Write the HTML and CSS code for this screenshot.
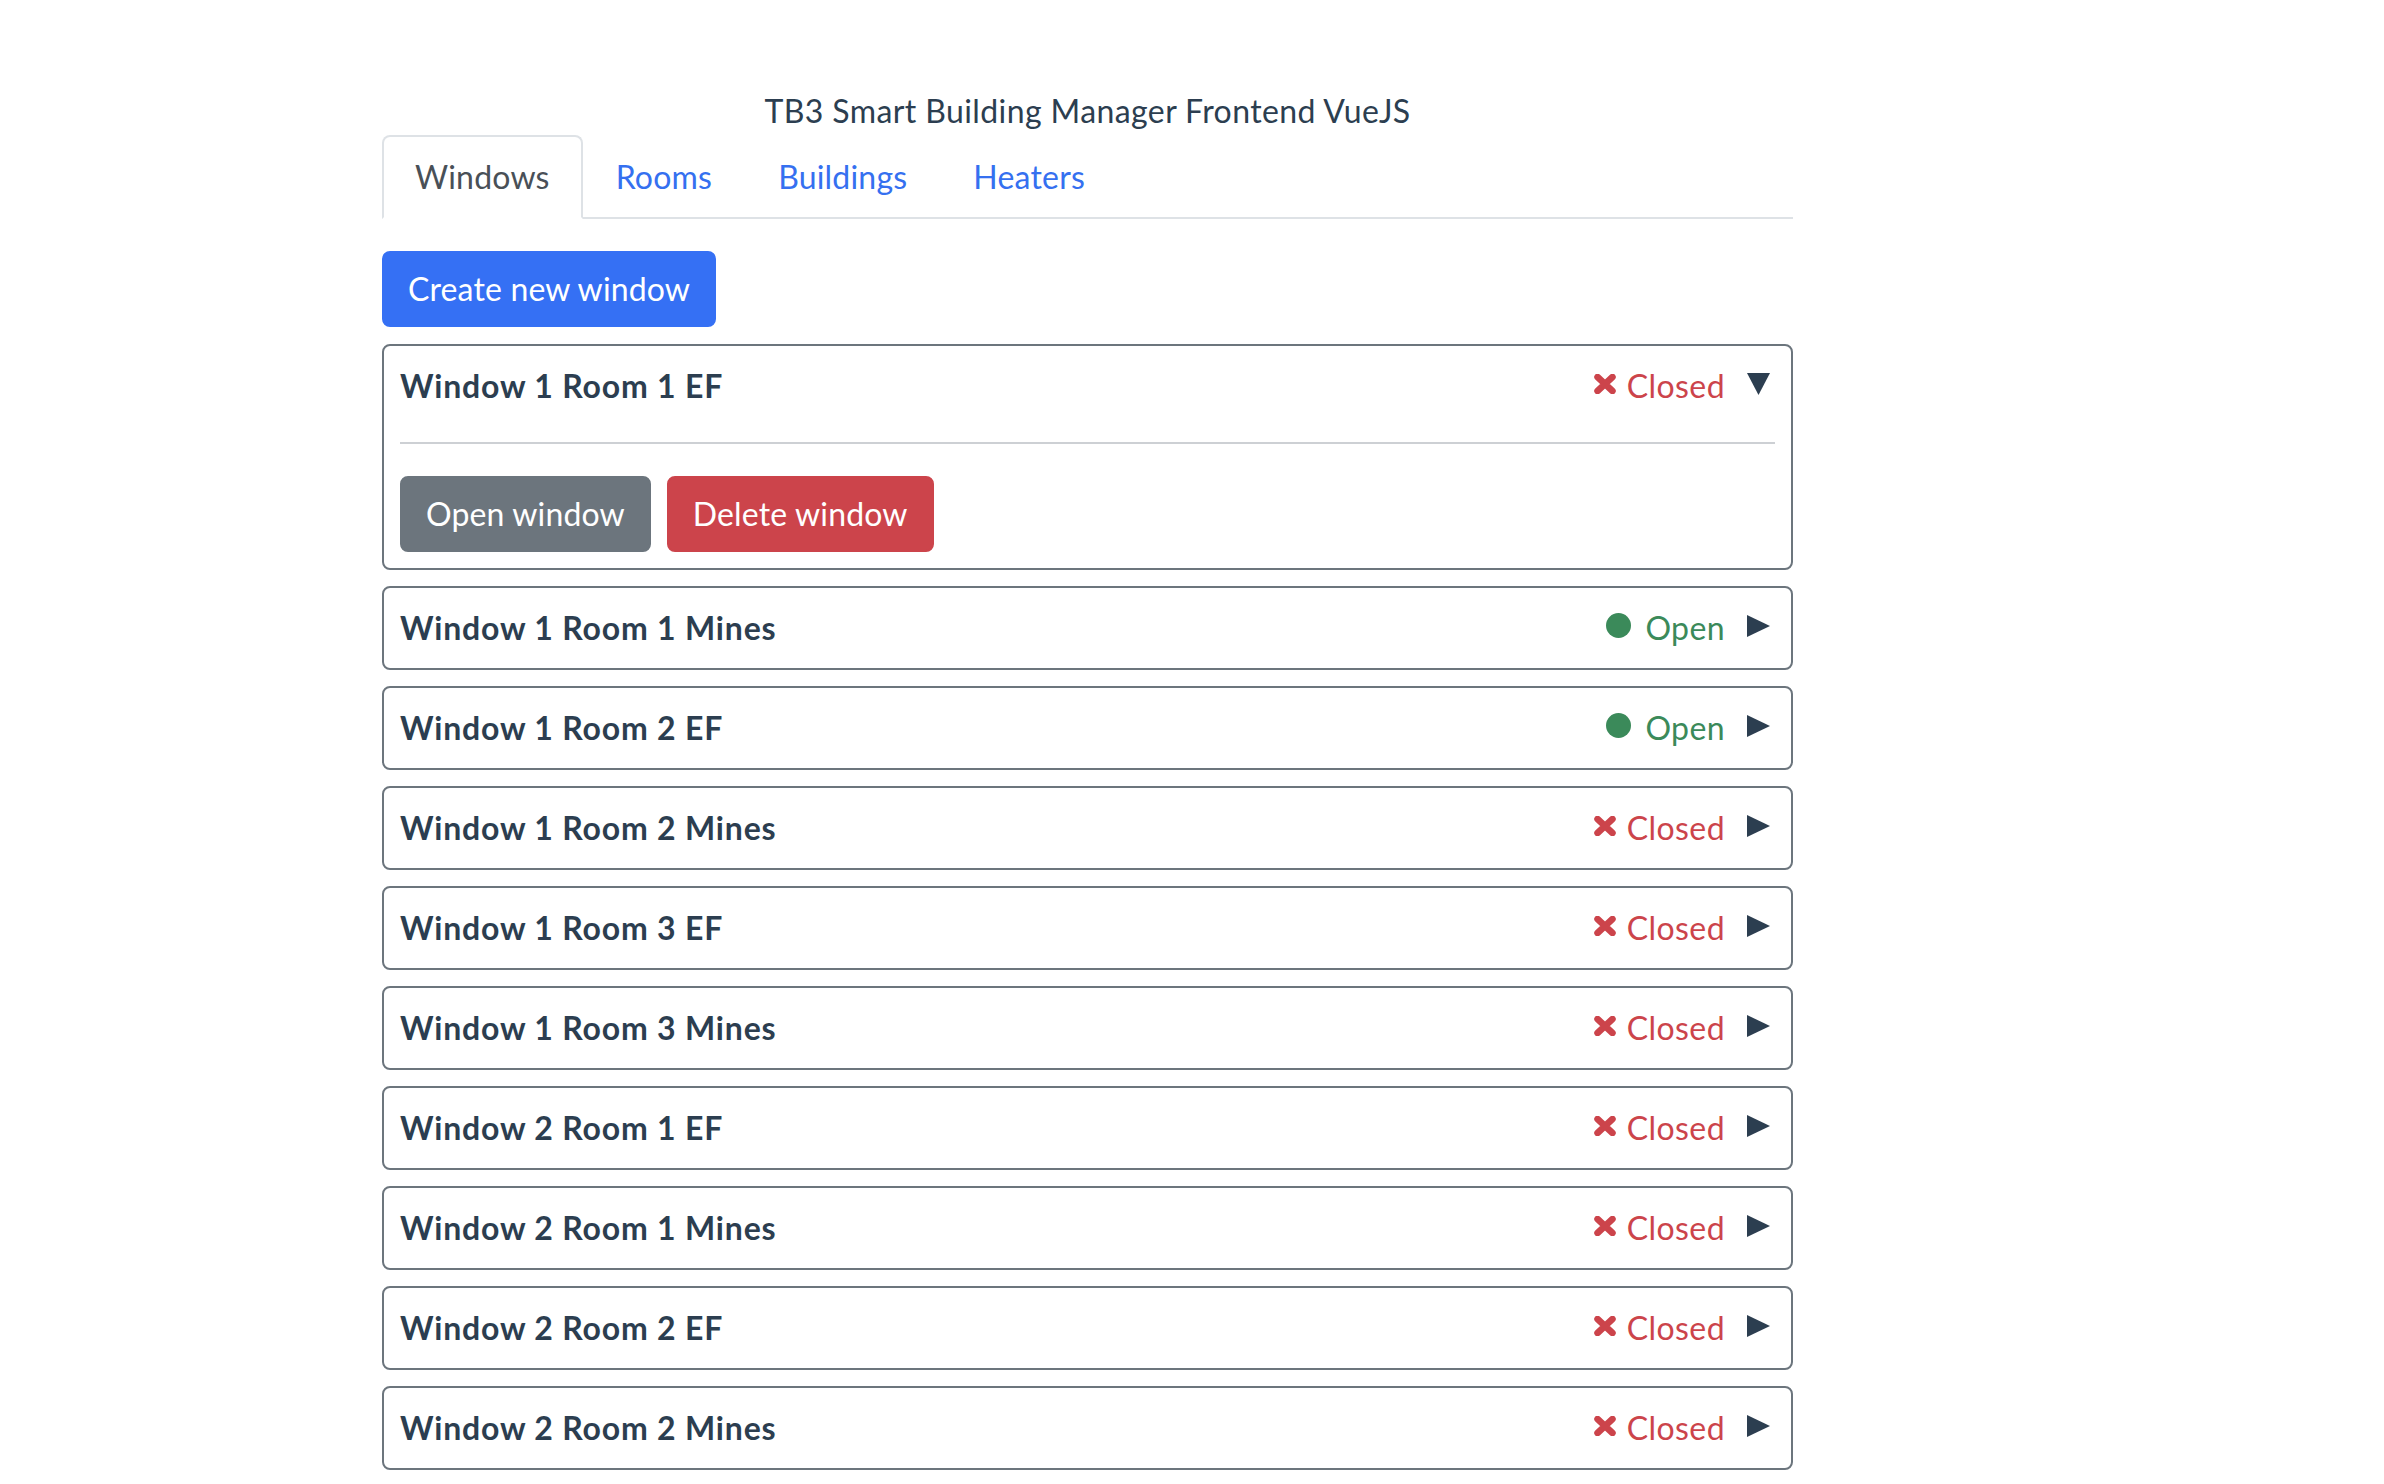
FILE: index.html
```html
<!DOCTYPE html>
<html lang="en">
<head>
<meta charset="utf-8">
<title>TB3 Smart Building Manager Frontend VueJS</title>
<link rel="stylesheet" href="styles.css">
</head>
<body>
<div class="page">
  <div class="container">
    <div class="app-title">TB3 Smart Building Manager Frontend VueJS</div>
    <ul class="tabs">
      <li class="tab active">Windows</li>
      <li class="tab">Rooms</li>
      <li class="tab">Buildings</li>
      <li class="tab">Heaters</li>
    </ul>
    <button class="btn btn-primary create-btn">Create new window</button>

    <div class="card">
      <div class="card-head">
        <span class="card-title">Window 1 Room 1 EF</span>
        <span class="status closed"><svg class="ico-x" viewBox="0 0 22 20" width="22" height="20"><path d="M3.5 3 L18.5 17 M18.5 3 L3.5 17" stroke="currentColor" stroke-width="6.5" stroke-linecap="round"/></svg>Closed</span>
        <svg class="caret" viewBox="0 0 23 22" width="23" height="22"><polygon points="0,0 23,0 11.5,22" /></svg>
      </div>
      <hr class="divider">
      <div class="actions">
        <button class="btn btn-secondary">Open window</button>
        <button class="btn btn-danger">Delete window</button>
      </div>
    </div>

    <div class="card">
      <div class="card-head">
        <span class="card-title">Window 1 Room 1 Mines</span>
        <span class="status open"><svg class="ico-dot" viewBox="0 0 25 25" width="25" height="25"><circle cx="12.5" cy="12.5" r="12.5"/></svg>Open</span>
        <svg class="caret" viewBox="0 0 23 22" width="23" height="22"><polygon points="0,0 23,11 0,22" /></svg>
      </div>
    </div>

    <div class="card">
      <div class="card-head">
        <span class="card-title">Window 1 Room 2 EF</span>
        <span class="status open"><svg class="ico-dot" viewBox="0 0 25 25" width="25" height="25"><circle cx="12.5" cy="12.5" r="12.5"/></svg>Open</span>
        <svg class="caret" viewBox="0 0 23 22" width="23" height="22"><polygon points="0,0 23,11 0,22" /></svg>
      </div>
    </div>

    <div class="card">
      <div class="card-head">
        <span class="card-title">Window 1 Room 2 Mines</span>
        <span class="status closed"><svg class="ico-x" viewBox="0 0 22 20" width="22" height="20"><path d="M3.5 3 L18.5 17 M18.5 3 L3.5 17" stroke="currentColor" stroke-width="6.5" stroke-linecap="round"/></svg>Closed</span>
        <svg class="caret" viewBox="0 0 23 22" width="23" height="22"><polygon points="0,0 23,11 0,22" /></svg>
      </div>
    </div>

    <div class="card">
      <div class="card-head">
        <span class="card-title">Window 1 Room 3 EF</span>
        <span class="status closed"><svg class="ico-x" viewBox="0 0 22 20" width="22" height="20"><path d="M3.5 3 L18.5 17 M18.5 3 L3.5 17" stroke="currentColor" stroke-width="6.5" stroke-linecap="round"/></svg>Closed</span>
        <svg class="caret" viewBox="0 0 23 22" width="23" height="22"><polygon points="0,0 23,11 0,22" /></svg>
      </div>
    </div>

    <div class="card">
      <div class="card-head">
        <span class="card-title">Window 1 Room 3 Mines</span>
        <span class="status closed"><svg class="ico-x" viewBox="0 0 22 20" width="22" height="20"><path d="M3.5 3 L18.5 17 M18.5 3 L3.5 17" stroke="currentColor" stroke-width="6.5" stroke-linecap="round"/></svg>Closed</span>
        <svg class="caret" viewBox="0 0 23 22" width="23" height="22"><polygon points="0,0 23,11 0,22" /></svg>
      </div>
    </div>

    <div class="card">
      <div class="card-head">
        <span class="card-title">Window 2 Room 1 EF</span>
        <span class="status closed"><svg class="ico-x" viewBox="0 0 22 20" width="22" height="20"><path d="M3.5 3 L18.5 17 M18.5 3 L3.5 17" stroke="currentColor" stroke-width="6.5" stroke-linecap="round"/></svg>Closed</span>
        <svg class="caret" viewBox="0 0 23 22" width="23" height="22"><polygon points="0,0 23,11 0,22" /></svg>
      </div>
    </div>

    <div class="card">
      <div class="card-head">
        <span class="card-title">Window 2 Room 1 Mines</span>
        <span class="status closed"><svg class="ico-x" viewBox="0 0 22 20" width="22" height="20"><path d="M3.5 3 L18.5 17 M18.5 3 L3.5 17" stroke="currentColor" stroke-width="6.5" stroke-linecap="round"/></svg>Closed</span>
        <svg class="caret" viewBox="0 0 23 22" width="23" height="22"><polygon points="0,0 23,11 0,22" /></svg>
      </div>
    </div>

    <div class="card">
      <div class="card-head">
        <span class="card-title">Window 2 Room 2 EF</span>
        <span class="status closed"><svg class="ico-x" viewBox="0 0 22 20" width="22" height="20"><path d="M3.5 3 L18.5 17 M18.5 3 L3.5 17" stroke="currentColor" stroke-width="6.5" stroke-linecap="round"/></svg>Closed</span>
        <svg class="caret" viewBox="0 0 23 22" width="23" height="22"><polygon points="0,0 23,11 0,22" /></svg>
      </div>
    </div>

    <div class="card">
      <div class="card-head">
        <span class="card-title">Window 2 Room 2 Mines</span>
        <span class="status closed"><svg class="ico-x" viewBox="0 0 22 20" width="22" height="20"><path d="M3.5 3 L18.5 17 M18.5 3 L3.5 17" stroke="currentColor" stroke-width="6.5" stroke-linecap="round"/></svg>Closed</span>
        <svg class="caret" viewBox="0 0 23 22" width="23" height="22"><polygon points="0,0 23,11 0,22" /></svg>
      </div>
    </div>
  </div>
</div>
</body>
</html>
```
FILE: styles.css
```css
* { box-sizing: border-box; }
html, body { margin: 0; padding: 0; background: #fff; }
body {
  font-family: Lato, "Noto Sans", "Liberation Sans", sans-serif;
  font-size: 32px;
  line-height: 48px;
  letter-spacing: 0.4px;
  color: #2c3e50;
}
.page {
  padding: 87px 0 0 382px;
}
.container {
  width: 1411px;
}
.app-title {
  text-align: center;
  font-size: 32px;
  line-height: 48px;
  color: #2c3e50;
}
.tabs {
  list-style: none;
  margin: 0 0 32px 0;
  padding: 0;
  display: flex;
  border-bottom: 2px solid #dee2e6;
}
.tab {
  padding: 16px 31px;
  border: 2px solid transparent;
  border-radius: 8px 8px 0 0;
  margin-bottom: -2px;
  letter-spacing: 0.2px;
  color: #3570f0;
}
.tab.active {
  color: #495057;
  border-color: #dee2e6 #dee2e6 #fff;
  background: #fff;
}
.btn {
  font-family: inherit;
  font-size: 32px;
  line-height: 48px;
  letter-spacing: 0.15px;
  padding: 12px 24px;
  border: 2px solid transparent;
  border-radius: 8px;
  color: #fff;
  cursor: pointer;
  display: inline-block;
}
.btn-primary { background: #3570f4; border-color: #3570f4; }
.btn-secondary { background: #6c757d; border-color: #6c757d; }
.btn-danger { background: #cc444b; border-color: #cc444b; }
.create-btn {
  display: block;
  margin-bottom: 17px;
}
.card {
  border: 2px solid #6c757d;
  border-radius: 8px;
  padding: 16px;
  margin-bottom: 16px;
}
.card-head {
  display: flex;
  align-items: center;
}
.card-title {
  font-weight: 700;
  letter-spacing: 0.8px;
  flex: 1;
}
.status {
  display: flex;
  align-items: center;
}
.status.closed { color: #cc444b; }
.status.open { color: #3b8a5a; }
.ico-x {
  margin-right: 11px;
  margin-bottom: 4px;
}
.ico-dot {
  margin-right: 14px;
  margin-bottom: 6px;
  fill: currentColor;
}
.caret {
  fill: #2c3e50;
  margin-left: 22px;
  margin-right: 5px;
  margin-bottom: 4px;
}
.divider {
  border: 0;
  border-top: 2px solid #cdd0d4;
  margin: 32px 0;
}
.actions {
  display: flex;
  gap: 16px;
}
```
